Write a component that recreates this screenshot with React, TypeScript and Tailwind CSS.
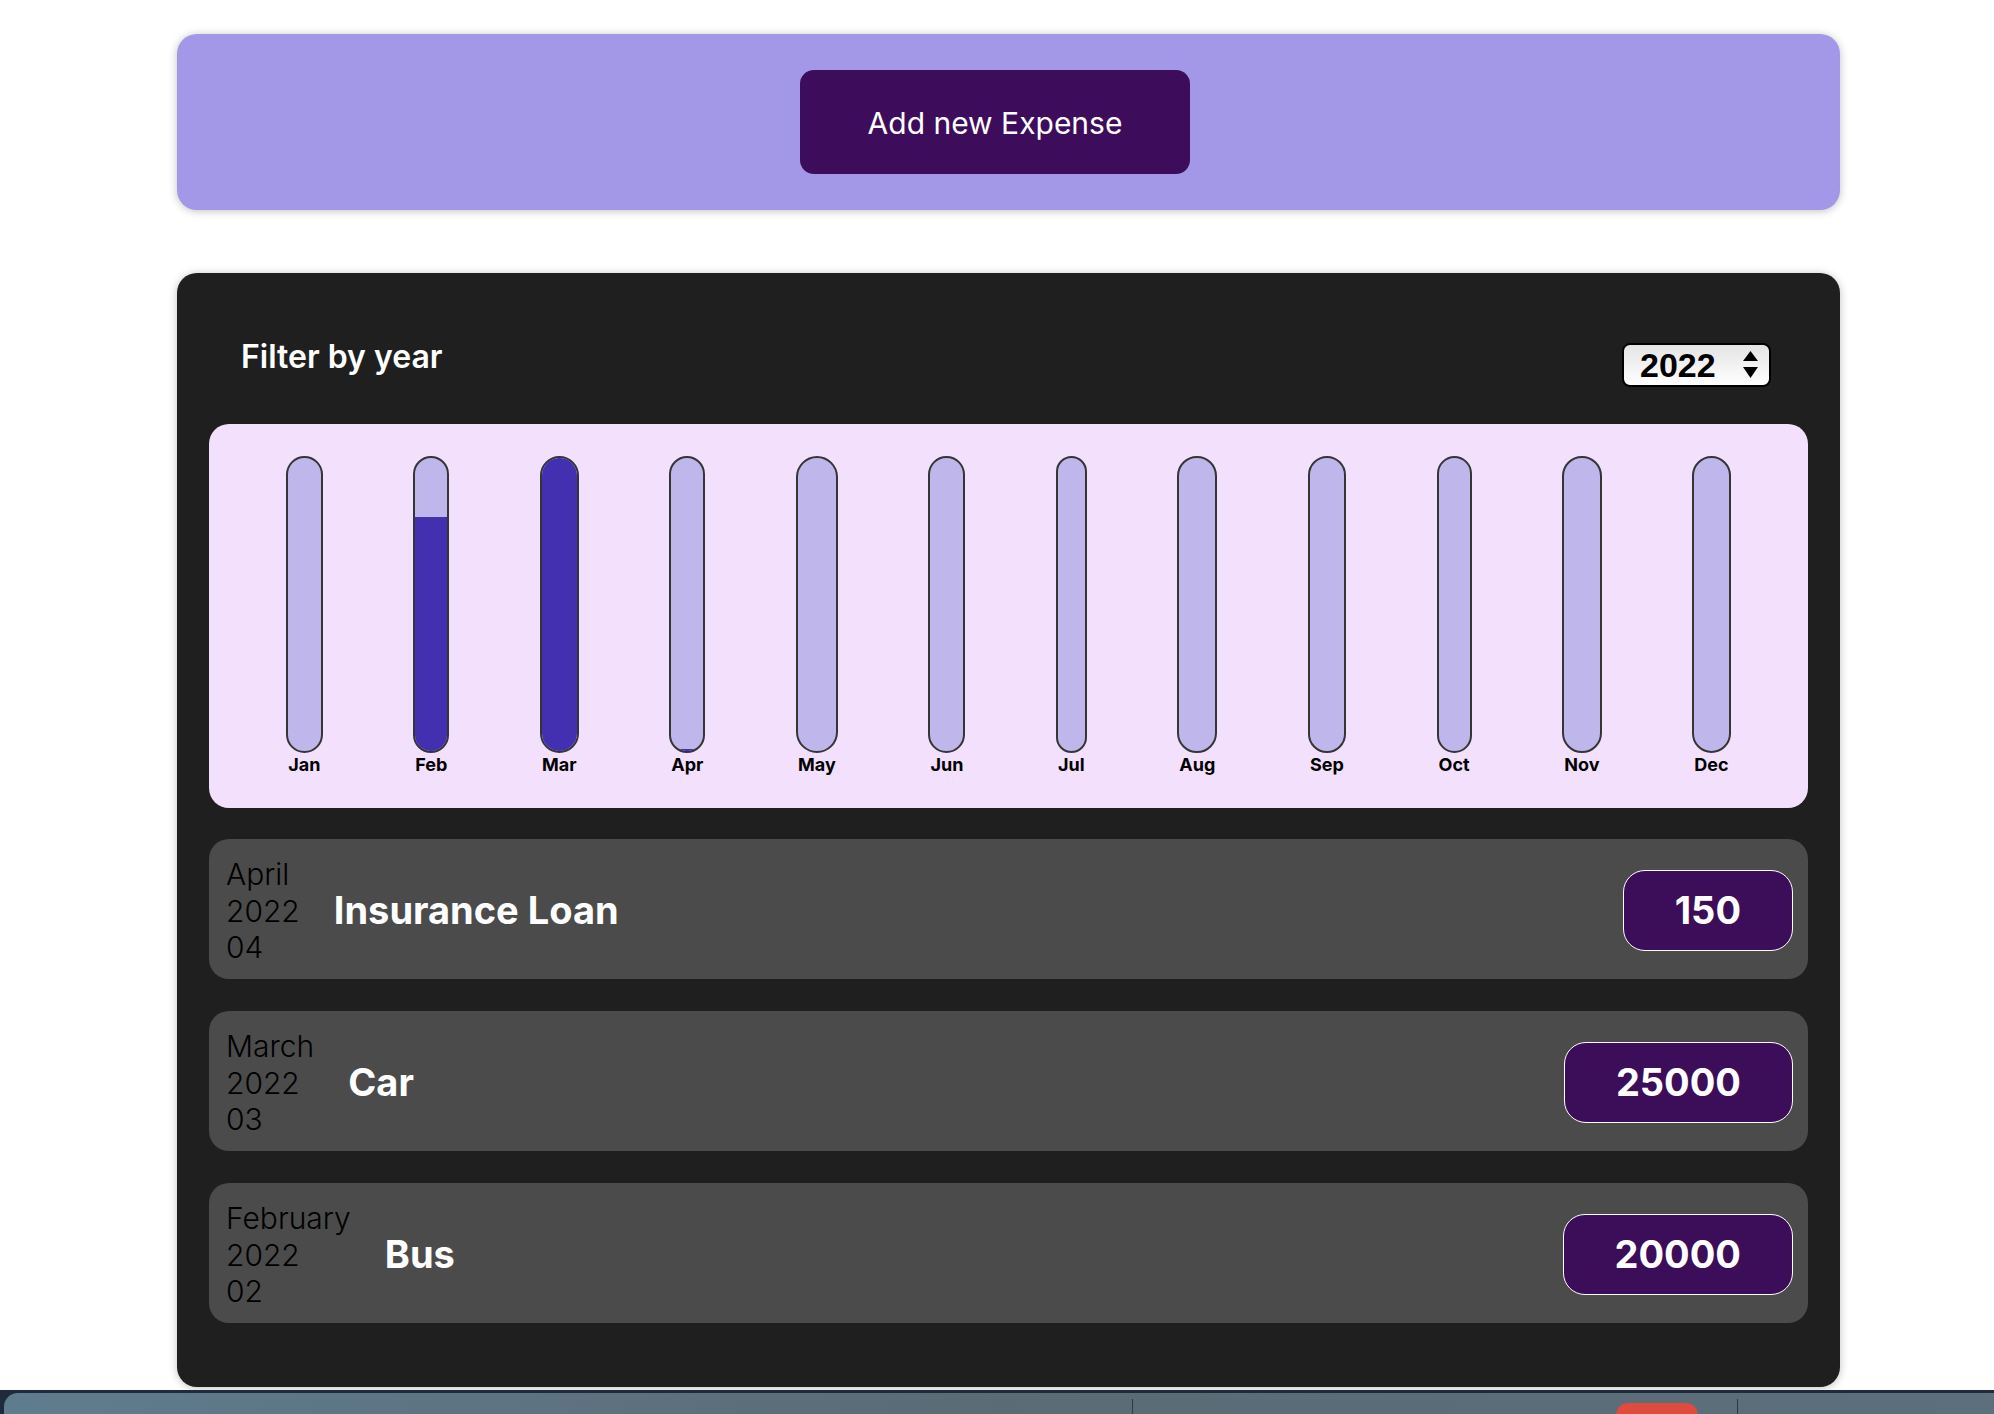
const months = ['Jan', 'Feb', 'Mar', 'Apr', 'May', 'Jun', 'Jul', 'Aug', 'Sep', 'Oct', 'Nov', 'Dec'];
const totals = [0, 20000, 25000, 150, 0, 0, 0, 0, 0, 0, 0, 0];
const maxTotal = 25000;

const expenses = [
  { month: 'April', year: '2022', day: '04', title: 'Insurance Loan', amount: 150 },
  { month: 'March', year: '2022', day: '03', title: 'Car', amount: 25000 },
  { month: 'February', year: '2022', day: '02', title: 'Bus', amount: 20000 },
];

function ChartBar({ label, value }: { label: string; value: number }) {
  const pct = Math.round((value / maxTotal) * 1000) / 10;
  return (
    <div className="flex h-full flex-col items-stretch">
      <div className="flex flex-1 flex-col justify-end overflow-hidden rounded-full border-2 border-[#353535] bg-[#bfb6ec]">
        <div className="bg-[#4230b0]" style={{ height: `${pct}%` }} />
      </div>
      <div className="px-[2px] text-[18px] font-bold leading-[23px] text-black">{label}</div>
    </div>
  );
}

function ExpenseItem({ month, year, day, title, amount }: (typeof expenses)[number]) {
  return (
    <div className="flex items-center rounded-[20px] bg-[#4b4b4b] pb-[13px] pl-[17px] pr-[15px] pt-[17px]">
      <div className="flex flex-col text-[30px] font-light leading-[36.5px] text-black">
        <span>{month}</span>
        <span>{year}</span>
        <span>{day}</span>
      </div>
      <h2 className="ml-[34px] flex-1 text-[38px] font-bold text-white">{title}</h2>
      <div className="flex h-[81px] items-center rounded-[22px] border border-white bg-[#3c0d58] px-[51px] text-[38px] font-bold text-white">
        {amount}
      </div>
    </div>
  );
}

export default function App() {
  return (
    <div className="flex h-[1414px] w-[1994px] flex-col overflow-hidden bg-white font-['Inter',sans-serif]">
      <div className="ml-[177px] mt-[34px] flex h-[176px] w-[1663px] items-center justify-center rounded-[20px] bg-[#a397e7] pr-[27px] shadow-[0_1px_8px_rgba(0,0,0,0.25)]">
        <button className="h-[104px] w-[390px] rounded-[14px] bg-[#3d0d5b] pt-[2px] text-[30px] text-white">Add new Expense</button>
      </div>

      <div className="ml-[177px] mt-[63px] w-[1663px] rounded-[20px] bg-[#1f1f1f] px-[32px] pb-[64px] pt-[60px] shadow-[0_1px_8px_rgba(0,0,0,0.25)]">
        <div className="flex h-[64px] items-center justify-between pl-[32px] pr-[37px]">
          <label className="mb-[16px] text-[32px] font-semibold leading-[48px] text-white">Filter by year</label>
          <div className="flex h-[44px] w-[149px] items-center justify-between rounded-[8px] border-2 border-black bg-gradient-to-b from-[#e4e4e4] to-white pl-[16px] pr-[11px]">
            <span className="font-['Liberation_Sans',sans-serif] text-[34px] font-bold leading-none text-black">2022</span>
            <svg width="15" height="28" viewBox="0 0 15 28">
              <path d="M7.5 0 L15 10 L0 10 Z" fill="#000" />
              <path d="M0 16 L15 16 L7.5 27 Z" fill="#000" />
            </svg>
          </div>
        </div>

        <div className="mt-[27px] flex h-[384px] justify-around rounded-[20px] bg-[#f3e0fd] p-[32px] text-center">
          {months.map((m, i) => (
            <ChartBar key={m} label={m} value={totals[i]} />
          ))}
        </div>

        <div className="mt-[31px] flex flex-col gap-[32.5px]">
          {expenses.map((e) => (
            <ExpenseItem key={e.title} {...e} />
          ))}
        </div>
      </div>

      <div className="mt-auto h-[24px] bg-[#1d2b3b] pl-[4px] pt-[3px]">
        <div className="relative h-full rounded-tl-[14px] bg-gradient-to-r from-[#5f7c8e] via-[#5a6b75] to-[#5b6f7c]">
          <div className="absolute left-[1128px] top-[6px] h-full w-px bg-[#2e3a42]" />
          <div className="absolute left-[1612px] top-[10px] h-[20px] w-[82px] rounded-t-[12px] bg-[#e04b3f]" />
          <div className="absolute left-[1733px] top-[6px] h-full w-px bg-[#2e3a42]" />
        </div>
      </div>
    </div>
  );
}
